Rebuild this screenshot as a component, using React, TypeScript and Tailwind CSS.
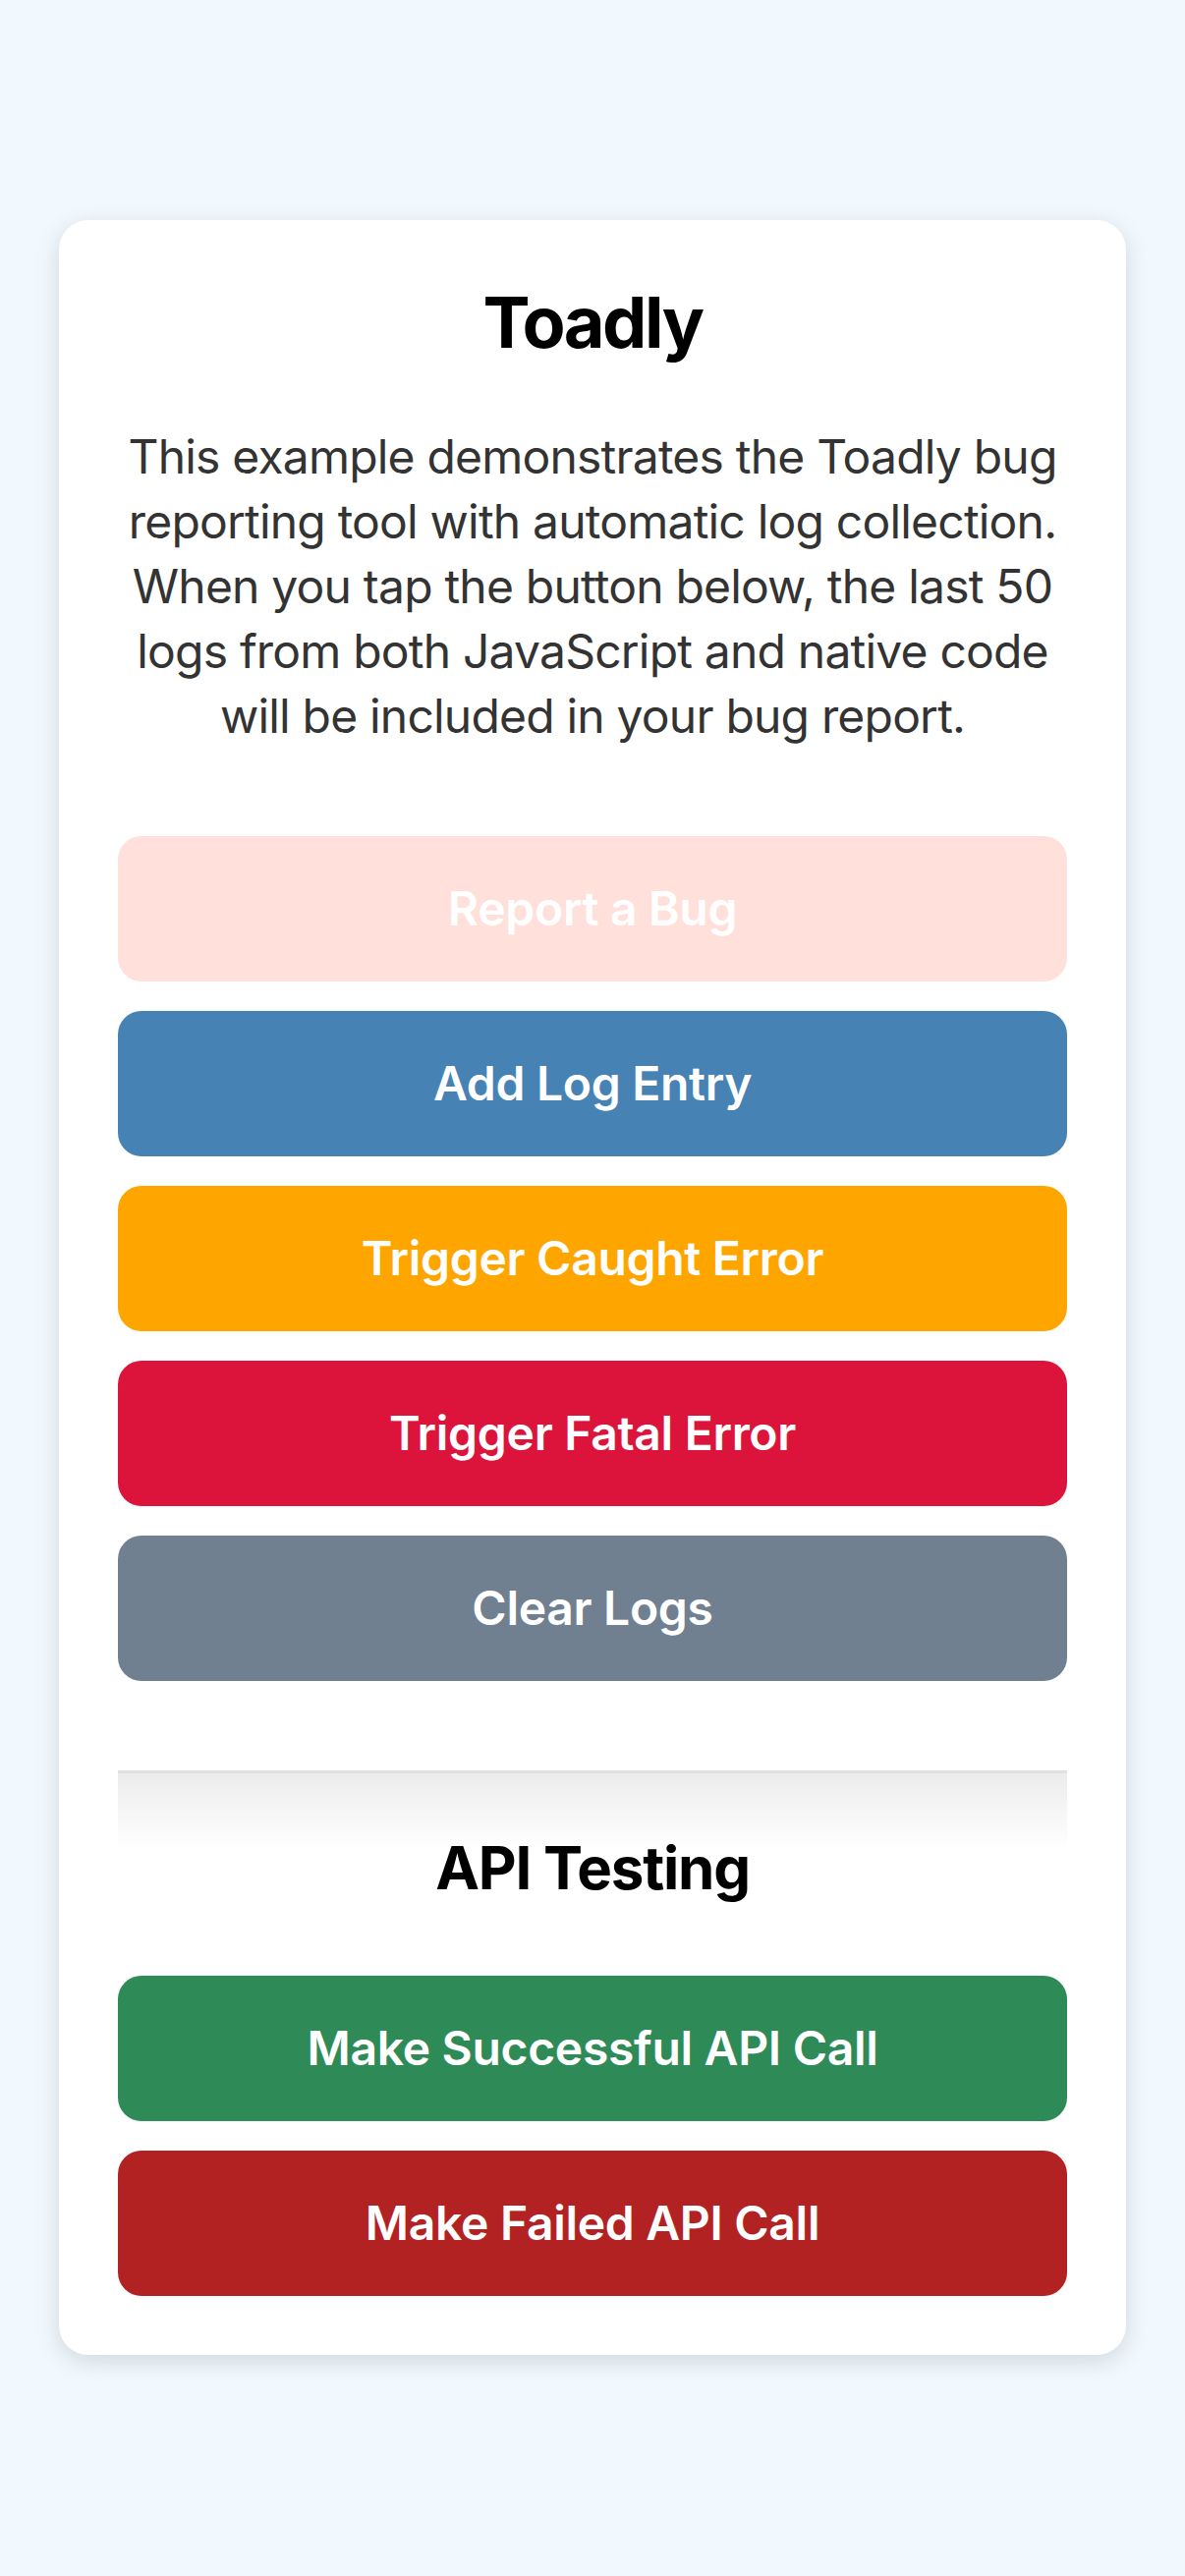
const buttons = [
  { label: "Report a Bug", cls: "bg-[#ffe0da] text-white" },
  { label: "Add Log Entry", cls: "bg-[#4682b4] text-white" },
  { label: "Trigger Caught Error", cls: "bg-[#ffa500] text-white" },
  { label: "Trigger Fatal Error", cls: "bg-[#dc143c] text-white" },
  { label: "Clear Logs", cls: "bg-[#708090] text-white" },
];

const apiButtons = [
  { label: "Make Successful API Call", cls: "bg-[#2e8b57] text-white" },
  { label: "Make Failed API Call", cls: "bg-[#b22222] text-white" },
];

const Btn = ({ label, cls }: { label: string; cls: string }) => (
  <button
    className={`w-full h-[148px] rounded-[24px] flex items-center justify-center text-[48px] font-semibold tracking-[-0.3px] ${cls}`}
  >
    {label}
  </button>
);

export default function App() {
  return (
    <div
      className="min-h-[2622px] bg-[#f1f9ff] pt-[224px] px-[60px]"
      style={{ fontFamily: "Inter, 'Noto Sans', sans-serif" }}
    >
      <div className="bg-white rounded-[30px] shadow-[0_6px_24px_rgba(0,0,0,0.14)] p-[60px]">
        <h1 className="text-center text-[72px] leading-[88px] font-bold tracking-[-2.5px] text-black">Toadly</h1>
        <p className="mt-[60px] text-center text-[48px] leading-[66px] text-[#333] tracking-[-0.8px]">
          This example demonstrates the Toadly bug
          <br />
          reporting tool with automatic log collection.
          <br />
          When you tap the button below, the last 50
          <br />
          logs from both JavaScript and native code
          <br />
          will be included in your bug report.
        </p>

        <div className="mt-[89px] flex flex-col gap-[30px]">
          {buttons.map((b) => (
            <Btn key={b.label} {...b} />
          ))}
        </div>

        <div className="mt-[91px] border-t-[3px] border-[#e0e0e0]">
          <div className="h-[77px] bg-gradient-to-b from-[#ececec] to-white" />
          <h2 className="-mt-[17px] text-center text-[60px] leading-[72px] font-bold tracking-[-1.2px] text-black">
            API Testing
          </h2>
          <div className="mt-[74px] flex flex-col gap-[30px]">
            {apiButtons.map((b) => (
              <Btn key={b.label} {...b} />
            ))}
          </div>
        </div>
      </div>
    </div>
  );
}
